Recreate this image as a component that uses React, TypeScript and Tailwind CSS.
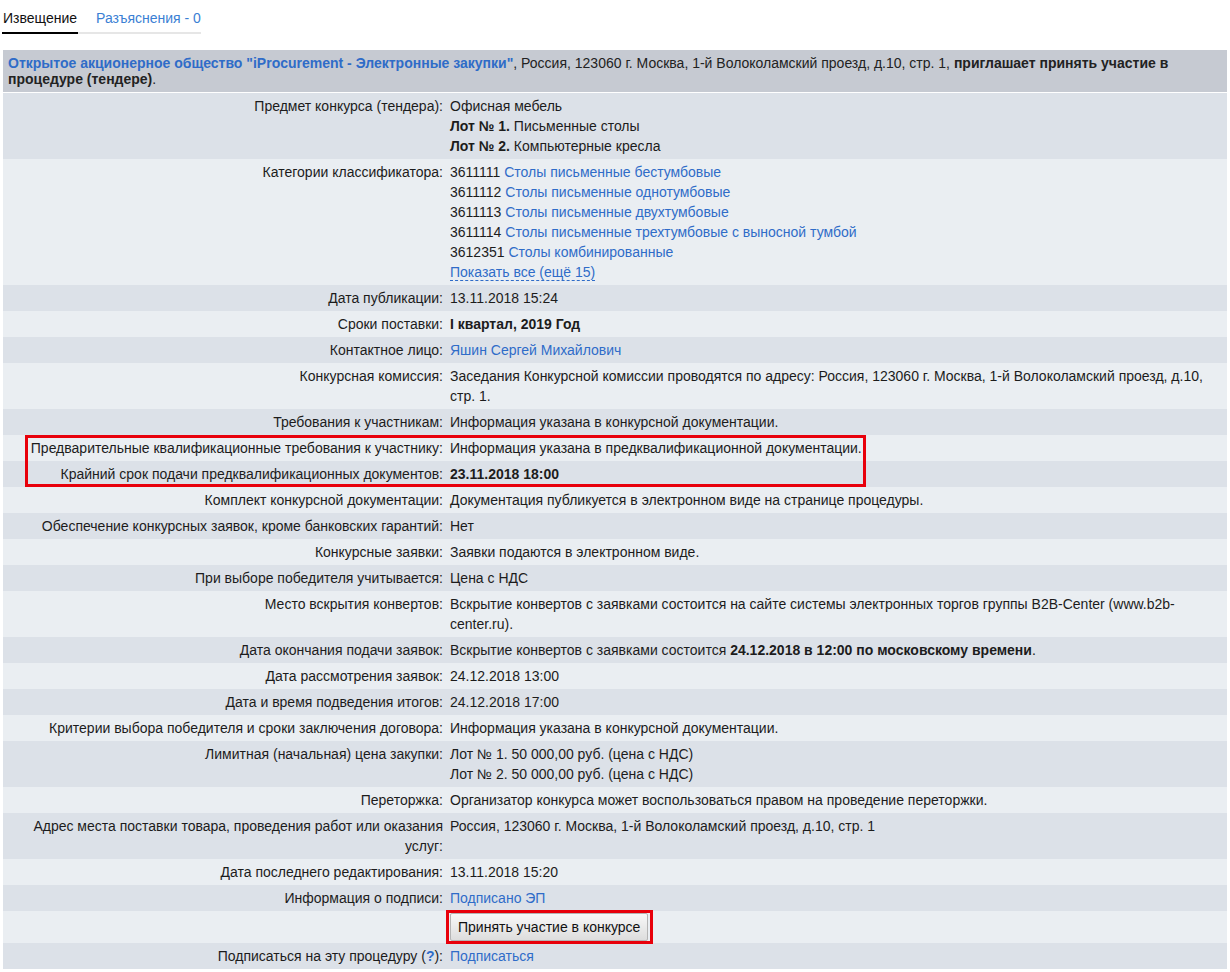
import type { ReactNode } from 'react';

interface Row {
  label: ReactNode;
  value: ReactNode;
  tall?: boolean;
}

function A({ children }: { children: ReactNode }) {
  return <a className="text-[#2f6cc8] no-underline cursor-pointer">{children}</a>;
}

const categories: [string, string][] = [
  ['3611111', 'Столы письменные бестумбовые'],
  ['3611112', 'Столы письменные однотумбовые'],
  ['3611113', 'Столы письменные двухтумбовые'],
  ['3611114', 'Столы письменные трехтумбовые с выносной тумбой'],
  ['3612351', 'Столы комбинированные'],
];

const rows: Row[] = [
  {
    label: 'Предмет конкурса (тендера):',
    value: (
      <>
        <div>Офисная мебель</div>
        <div>
          <b>Лот № 1.</b> Письменные столы
        </div>
        <div>
          <b>Лот № 2.</b> Компьютерные кресла
        </div>
      </>
    ),
  },
  {
    label: 'Категории классификатора:',
    value: (
      <>
        {categories.map(([code, name]) => (
          <div key={code}>
            {code} <A>{name}</A>
          </div>
        ))}
        <div>
          <span className="text-[#2f6cc8] border-b border-dashed border-[#2f6cc8] cursor-pointer">
            Показать все (ещё 15)
          </span>
        </div>
      </>
    ),
  },
  { label: 'Дата публикации:', value: '13.11.2018 15:24' },
  { label: 'Сроки поставки:', value: <b>I квартал, 2019 Год</b> },
  { label: 'Контактное лицо:', value: <A>Яшин Сергей Михайлович</A> },
  {
    label: 'Конкурсная комиссия:',
    value:
      'Заседания Конкурсной комиссии проводятся по адресу: Россия, 123060 г. Москва, 1-й Волоколамский проезд, д.10, стр. 1.',
  },
  { label: 'Требования к участникам:', value: 'Информация указана в конкурсной документации.' },
  {
    label: 'Предварительные квалификационные требования к участнику:',
    value: 'Информация указана в предквалификационной документации.',
  },
  {
    label: 'Крайний срок подачи предквалификационных документов:',
    value: <b>23.11.2018 18:00</b>,
  },
  {
    label: 'Комплект конкурсной документации:',
    value: 'Документация публикуется в электронном виде на странице процедуры.',
  },
  { label: 'Обеспечение конкурсных заявок, кроме банковских гарантий:', value: 'Нет' },
  { label: 'Конкурсные заявки:', value: 'Заявки подаются в электронном виде.' },
  { label: 'При выборе победителя учитывается:', value: 'Цена с НДС' },
  {
    label: 'Место вскрытия конвертов:',
    value:
      'Вскрытие конвертов с заявками состоится на сайте системы электронных торгов группы B2B-Center (www.b2b-center.ru).',
  },
  {
    label: 'Дата окончания подачи заявок:',
    value: (
      <>
        Вскрытие конвертов с заявками состоится <b>24.12.2018 в 12:00 по московскому времени</b>.
      </>
    ),
  },
  { label: 'Дата рассмотрения заявок:', value: '24.12.2018 13:00' },
  { label: 'Дата и время подведения итогов:', value: '24.12.2018 17:00' },
  {
    label: 'Критерии выбора победителя и сроки заключения договора:',
    value: 'Информация указана в конкурсной документации.',
  },
  {
    label: 'Лимитная (начальная) цена закупки:',
    value: (
      <>
        <div>Лот № 1. 50 000,00 руб. (цена с НДС)</div>
        <div>Лот № 2. 50 000,00 руб. (цена с НДС)</div>
      </>
    ),
  },
  {
    label: 'Переторжка:',
    value: 'Организатор конкурса может воспользоваться правом на проведение переторжки.',
  },
  {
    label: 'Адрес места поставки товара, проведения работ или оказания услуг:',
    value: 'Россия, 123060 г. Москва, 1-й Волоколамский проезд, д.10, стр. 1',
  },
  { label: 'Дата последнего редактирования:', value: '13.11.2018 15:20' },
  { label: 'Информация о подписи:', value: <A>Подписано ЭП</A> },
  {
    label: '',
    tall: true,
    value: (
      <button className="h-[28px] px-[7px] border border-[#b4b4b4] rounded-[2px] bg-gradient-to-b from-[#f8f8f8] to-[#dddddd] text-[14px] text-[#111] leading-none cursor-pointer">
        Принять участие в конкурсе
      </button>
    ),
  },
  {
    label: (
      <>
        Подписаться на эту процедуру (<b className="text-[#2f6cc8]">?</b>):
      </>
    ),
    value: <A>Подписаться</A>,
  },
];

export default function App() {
  return (
    <div className="relative w-[1230px] min-h-[972px] bg-white font-['Liberation_Sans',Arial,sans-serif] text-[14px] text-[#1c1c1c]">
      {/* tabs */}
      <div className="flex pt-[8px] pl-[2px] leading-5">
        <div className="px-px pb-[4px] border-b-2 border-black text-[#111]">Извещение</div>
        <div className="pl-[18px] pb-[4px] border-b-2 border-[#e6e6e6] text-[#3b7fd4] cursor-pointer">
          Разъяснения - 0
        </div>
      </div>

      <div className="mt-[16px] mx-[3px] w-[1224px]">
        <div className="bg-[#c6cad2] px-[5px] pt-[5px] pb-[5px] leading-4 text-[#222] border-b border-white">
          <b className="text-[#2f6cc8]">Открытое акционерное общество "iProcurement - Электронные закупки"</b>,
          Россия, 123060 г. Москва, 1-й Волоколамский проезд, д.10, стр. 1,{' '}
          <b>приглашает принять участие в процедуре (тендере)</b>.
        </div>

        {rows.map((row, i) => (
          <div
            key={i}
            className={`grid grid-cols-[444px_1fr] leading-5 ${i % 2 === 0 ? 'bg-[#dce1e8]' : 'bg-[#eaeef2]'}`}
          >
            <div className={`text-right pl-[5px] pr-[4px] ${row.tall ? 'py-[2px]' : 'py-[3px]'}`}>
              {row.label}
            </div>
            <div className={`pl-[3px] pr-[5px] ${row.tall ? 'py-[2px]' : 'py-[3px]'}`}>{row.value}</div>
          </div>
        ))}
      </div>

      {/* annotation frames */}
      <div className="absolute left-[25px] top-[435px] w-[841px] h-[52px] border-[3px] border-[#e8000b] pointer-events-none" />
      <div className="absolute left-[446px] top-[910px] w-[207px] h-[34px] border-[3px] border-[#e8000b] pointer-events-none" />
    </div>
  );
}
